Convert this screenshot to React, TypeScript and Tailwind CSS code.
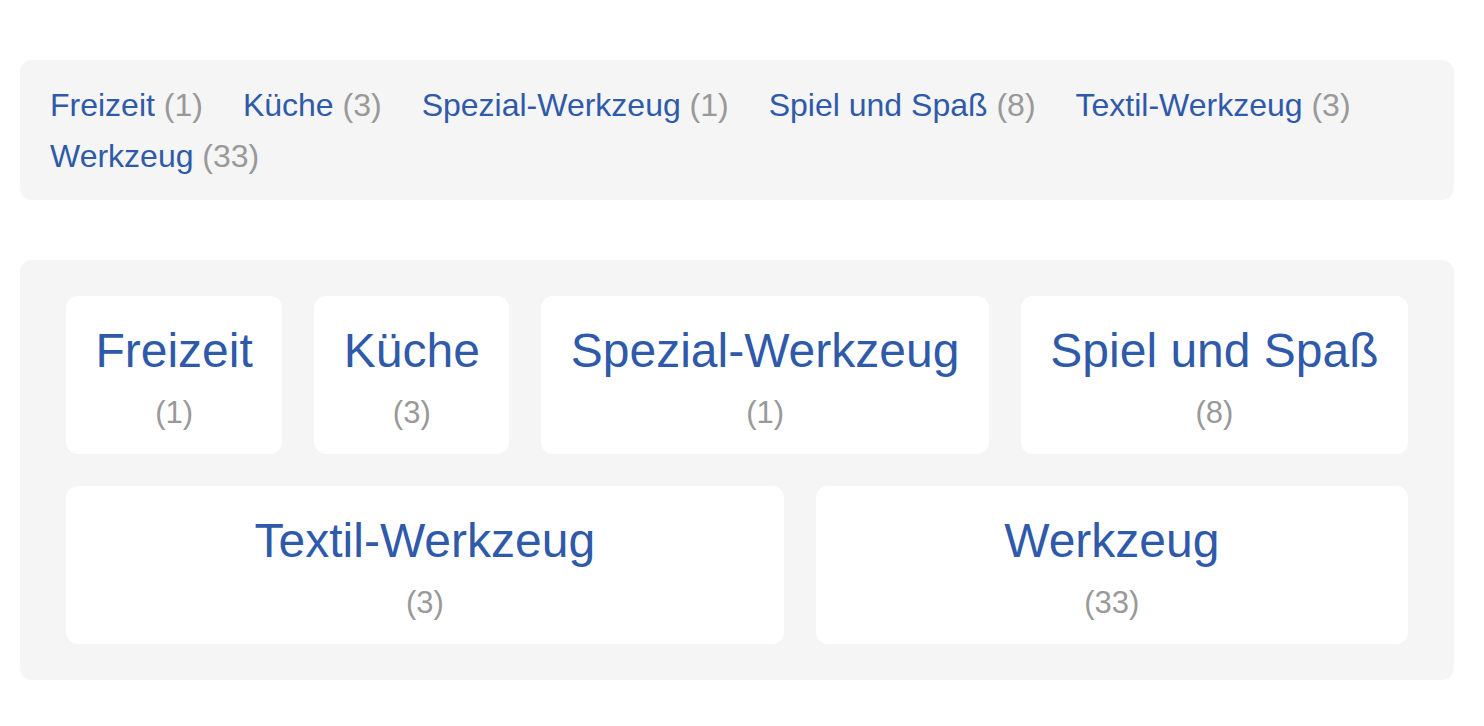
import React from "react";

const items = [
  { name: "Freizeit", count: 1 },
  { name: "Küche", count: 3 },
  { name: "Spezial-Werkzeug", count: 1 },
  { name: "Spiel und Spaß", count: 8 },
  { name: "Textil-Werkzeug", count: 3 },
  { name: "Werkzeug", count: 33 },
];

function Card({ name, count }: { name: string; count: number }) {
  return (
    <a
      href="#"
      className="grow flex flex-col items-center bg-white rounded-[12px] pt-[18px] pb-[16px] px-[28px]"
    >
      <span className="text-[48px] leading-[74px] text-[#2f5aa9] whitespace-nowrap">{name}</span>
      <span className="text-[31px] leading-[50px] text-[#999999]">({count})</span>
    </a>
  );
}

export default function App() {
  return (
    <div
      className="bg-white w-[1484px] min-h-[726px] pt-[60px] pl-[20px] pr-[30px]"
      style={{ fontFamily: '"Liberation Sans", Arial, sans-serif' }}
    >
      <div className="bg-[#f5f5f5] rounded-[12px] pt-[20px] pb-[18px] px-[30px] flex flex-wrap gap-x-[40px] text-[32px] leading-[51px]">
        {items.map((it) => (
          <a key={it.name} href="#" className="whitespace-nowrap">
            <span className="text-[#2f5aa9]">{it.name}</span>{" "}
            <span className="text-[#999999]">({it.count})</span>
          </a>
        ))}
      </div>
      <div className="mt-[60px] bg-[#f5f5f5] rounded-[12px] py-[36px] px-[46px] flex flex-col gap-[32px]">
        <div className="flex gap-[32px]">
          {items.slice(0, 4).map((it) => (
            <Card key={it.name} {...it} />
          ))}
        </div>
        <div className="flex gap-[32px]">
          {items.slice(4).map((it) => (
            <Card key={it.name} {...it} />
          ))}
        </div>
      </div>
    </div>
  );
}
